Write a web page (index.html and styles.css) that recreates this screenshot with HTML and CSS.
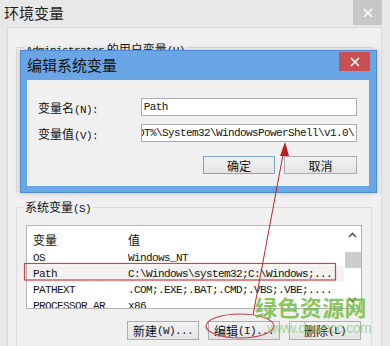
FILE: index.html
```html
<!DOCTYPE html>
<html lang="zh-CN">
<head>
    <meta charset="UTF-8">
    <title>环境变量</title>
    <link rel="stylesheet" href="styles.css">
</head>
<body>
    <div class="window">
        <div class="titlebar">
            <span class="title">环境变量</span>
            <span class="close close-gray">
                <svg width="10" height="10" viewBox="0 0 10 10"><path d="M1 1L9 9M9 1L1 9" stroke="#fff" stroke-width="1.5"/></svg>
            </span>
        </div>
        <div class="client">
            <div class="group user-group">
                <div class="group-label"><span class="m">Administrator</span> 的用户变量<span class="m">(U)</span></div>
            </div>

            <div class="group sys-group">
                <div class="group-label">系统变量<span class="m">(S)</span></div>
                <div class="listbox">
                    <div class="list-rows">
                        <div class="row head"><span class="c1">变量</span><span class="c2">值</span></div>
                        <div class="row"><span class="c1 m">OS</span><span class="c2 m">Windows_NT</span></div>
                        <div class="row sel"><span class="c1 m">Path</span><span class="c2 m">C:\Windows\system32;C:\Windows;...</span></div>
                        <div class="row"><span class="c1 m">PATHEXT</span><span class="c2 m">.COM;.EXE;.BAT;.CMD;.VBS;.VBE;....</span></div>
                        <div class="row"><span class="c1 m">PROCESSOR_AR</span><span class="c2 m">x86</span></div>
                    </div>
                    <div class="scrollbar">
                        <span class="arrow">
                            <svg width="9" height="6" viewBox="0 0 9 6"><path d="M1 5L4.5 1.5L8 5" fill="none" stroke="#555" stroke-width="1.6"/></svg>
                        </span>
                        <span class="thumb"></span>
                        <span class="arrow arrow-down">
                            <svg width="9" height="6" viewBox="0 0 9 6"><path d="M1 1L4.5 4.5L8 1" fill="none" stroke="#555" stroke-width="1.6"/></svg>
                        </span>
                    </div>
                </div>
                <div class="list-buttons">
                    <span class="btn">新建<span class="m">(W)...</span></span>
                    <span class="btn">编辑<span class="m">(I)...</span></span>
                    <span class="btn">删除<span class="m">(L)</span></span>
                </div>
            </div>
        </div>
    </div>

    <!-- edit dialog on top of the main window -->
    <div class="dialog">
        <div class="dialog-title">
            <span class="dialog-caption">编辑系统变量</span>
            <span class="close close-red">
                <svg width="10" height="10" viewBox="0 0 10 10"><path d="M1 1L9 9M9 1L1 9" stroke="#fff" stroke-width="1.6"/></svg>
            </span>
        </div>
        <div class="dialog-body">
            <div class="field">
                <label>变量名<span class="m">(N):</span></label>
                <div class="input"><span class="m">Path</span></div>
            </div>
            <div class="field">
                <label>变量值<span class="m">(V):</span></label>
                <div class="input input-end"><span class="m">%SYSTEMROOT%\System32\WindowsPowerShell\v1.0\</span></div>
            </div>
            <div class="dialog-buttons">
                <span class="btn btn-default">确定</span>
                <span class="btn btn-wide">取消</span>
            </div>
        </div>
    </div>

    <!-- red annotations -->
    <svg class="marks" width="390" height="346" viewBox="0 0 390 346">
        <rect x="24.5" y="263.5" width="311" height="16.5" fill="none" stroke="#c8444a" stroke-width="1.2"/>
        <line x1="253" y1="315" x2="283.5" y2="152" stroke="#b8282e" stroke-width="1"/>
        <polygon points="285,142 280,156 289,156" fill="#c01a20"/>
        <ellipse cx="240" cy="326" rx="34" ry="12" fill="none" stroke="#c0464a" stroke-width="1.2"/>
    </svg>

    <div class="watermark">
        <div class="wm-name">绿色资源网</div>
        <div class="wm-url">www.downcc.com</div>
    </div>
</body>
</html>
```

FILE: styles.css
```css
/* Window frame */
body {
    margin: 0;
    width: 390px;
    height: 346px;
    overflow: hidden;
    position: relative;
    background-color: #e8e8e8;
    font-family: "Noto Sans CJK SC", sans-serif;
    color: #111;
}

.m {
    font-family: "Liberation Mono", "Noto Sans CJK SC", monospace;
    font-size: 11px;
    letter-spacing: -0.6px;
}

.titlebar {
    height: 27px;
    display: flex;
    justify-content: space-between;
    align-items: flex-start;
}

.title {
    font-size: 15px;
    line-height: 26px;
    padding-left: 4px;
    color: #222;
}

.close {
    display: flex;
    align-items: center;
    justify-content: center;
}

.close-gray {
    width: 29px;
    height: 25px;
    margin-right: 8px;
    background-color: #c7c7c7;
}

.client {
    margin: 0 8px 0 7px;
    height: 319px;
    box-sizing: border-box;
    overflow: hidden;
    background-color: #f0f0f0;
    border: 1px solid #dadada;
    border-bottom: none;
    padding: 19px 9px 0 8px;
}

/* Group boxes */
.group {
    border: 1px solid #dcdcdc;
}

.group-label {
    width: max-content;
    margin: -8px 0 0 7px;
    padding: 0 2px;
    background-color: #f0f0f0;
    font-size: 12px;
    line-height: 14px;
}

.user-group {
    height: 145px;
    box-sizing: border-box;
}

.user-group .group-label {
    margin-top: -6px;
}

.sys-group {
    margin-top: 15px;
    height: 138px;
    border-bottom: none;
    padding: 0 9px;
}

.sys-group .group-label {
    margin-left: -3px;
}

/* List view */
.listbox {
    margin-top: 9px;
    height: 84px;
    box-sizing: border-box;
    border: 1px solid #b4b4b4;
    background-color: #fff;
    display: flex;
}

.list-rows {
    flex: 1;
    padding-top: 2px;
    overflow: hidden;
}

.row {
    display: flex;
    align-items: center;
    height: 16px;
    white-space: nowrap;
}

.row.head {
    height: 22px;
    font-size: 12px;
}

.row.sel {
    background-color: #f4f1f1;
}

.c1 {
    width: 95px;
    padding-left: 6px;
    flex-shrink: 0;
}

.scrollbar {
    width: 17px;
    display: flex;
    flex-direction: column;
    align-items: center;
}

.arrow {
    height: 17px;
    display: flex;
    align-items: center;
    justify-content: center;
}

.thumb {
    width: 16px;
    height: 16px;
    margin-top: 9px;
    background-color: #cdcdcd;
}

.arrow-down {
    margin-top: auto;
}

/* Buttons */
.list-buttons,
.dialog-buttons {
    display: flex;
    justify-content: flex-end;
    gap: 9px;
}

.list-buttons {
    margin-top: 12px;
    padding-right: 1px;
}

.btn {
    width: 72px;
    height: 19px;
    box-sizing: border-box;
    border: 1px solid #acacac;
    background: linear-gradient(#f2f2f2, #e4e4e4);
    font-size: 12px;
    display: flex;
    align-items: center;
    justify-content: center;
    white-space: nowrap;
}

.btn-default {
    border-color: #7da2ce;
}

.btn-wide {
    width: 73px;
}

/* Edit dialog */
.dialog {
    position: absolute;
    left: 20px;
    top: 50px;
    width: 357px;
    height: 143px;
    box-sizing: border-box;
    background-color: #6aa6e6;
    border: 1px solid #4f8bd3;
    box-shadow: 0 0 6px rgba(0, 0, 0, 0.2);
    display: flex;
    flex-direction: column;
}

.dialog-title {
    height: 29px;
    display: flex;
    justify-content: space-between;
    align-items: flex-start;
}

.dialog-caption {
    font-size: 15px;
    line-height: 28px;
    padding-left: 6px;
    color: #111;
}

.close-red {
    width: 31px;
    height: 19px;
    margin: 1px 6px 0 0;
    background-color: #c75050;
}

.dialog-body {
    flex: 1;
    margin: 0 7px 6px 6px;
    background-color: #f0f0f0;
    padding: 18px 12px 0 11px;
}

.field {
    display: flex;
    align-items: center;
    height: 18px;
}

.field + .field {
    margin-top: 8px;
}

.field label {
    width: 103px;
    font-size: 12px;
}

.input {
    width: 217px;
    height: 18px;
    box-sizing: border-box;
    border: 1px solid #abadb3;
    background-color: #fff;
    padding: 0 2px;
    display: flex;
    align-items: center;
    overflow: hidden;
    white-space: nowrap;
}

.input-end {
    justify-content: flex-end;
}

.dialog-buttons {
    margin-top: 14px;
}

.dialog-buttons .btn {
    height: 18px;
}

/* Annotations and watermark */
.marks {
    position: absolute;
    left: 0;
    top: 0;
    pointer-events: none;
}

.watermark {
    position: absolute;
    left: 255px;
    top: 294px;
    pointer-events: none;
}

.wm-name {
    font-size: 22px;
    line-height: 24px;
    font-weight: 700;
    color: rgba(110, 186, 60, 0.82);
    letter-spacing: 0.4px;
}

.wm-url {
    margin: 3px 0 0 12px;
    font-family: "Liberation Sans", sans-serif;
    font-size: 14px;
    line-height: 14px;
    letter-spacing: -0.5px;
    color: rgba(130, 190, 100, 0.6);
}
```
